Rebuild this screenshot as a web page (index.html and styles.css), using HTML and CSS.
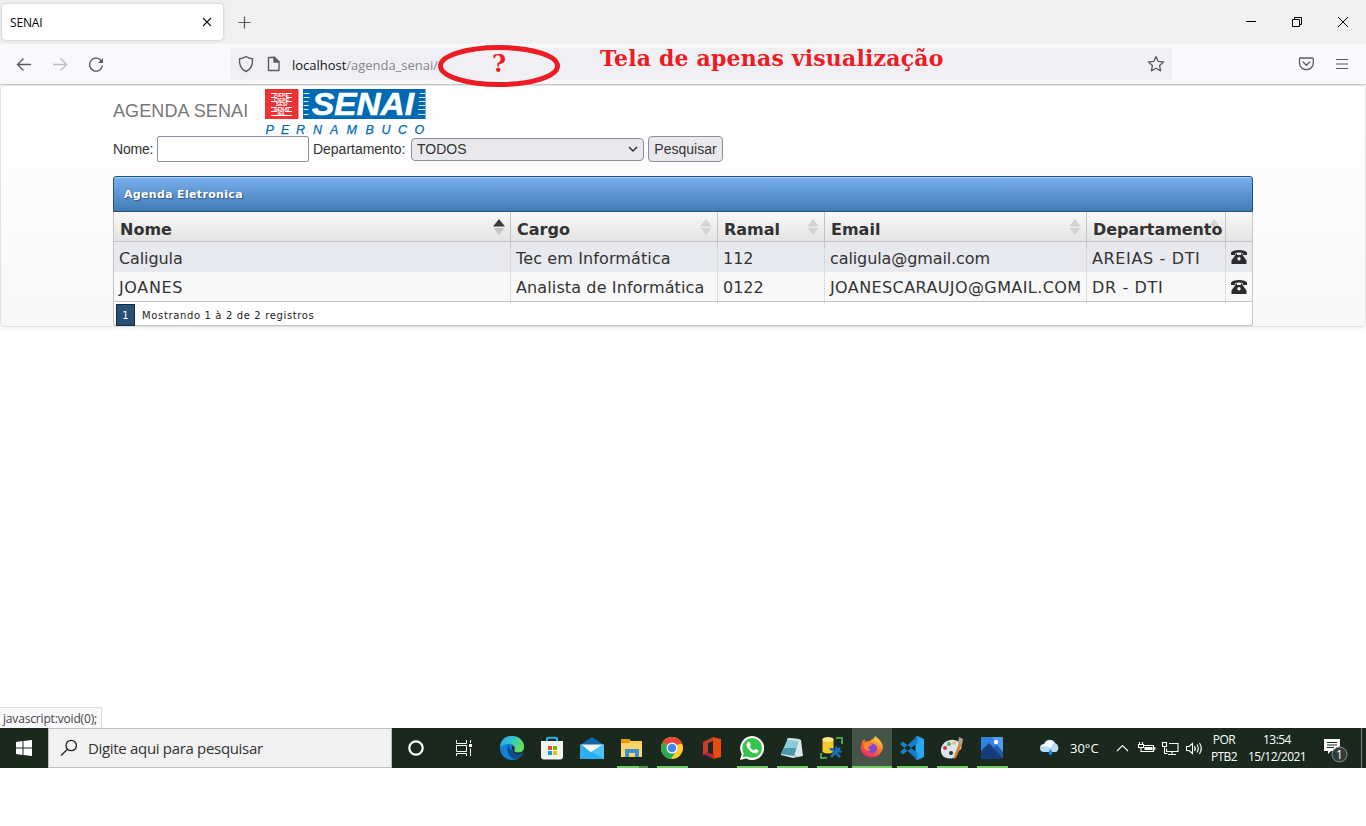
FILE: index.html
```html
<!DOCTYPE html>
<html lang="pt-BR">
<head>
<meta charset="utf-8">
<title>SENAI</title>
<link rel="stylesheet" href="styles.css">
</head>
<body>
<header class="tabstrip">
  <div class="tab"><span>SENAI</span><svg width="10" height="10" viewBox="0 0 10 10"><path d="M1 1l8 8M9 1l-8 8" stroke="#15141a" stroke-width="1.1"/></svg></div>
  <svg class="newtab" width="13" height="13" viewBox="0 0 13 13"><path d="M6.5 0.5v12M0.5 6.5h12" stroke="#5b5b66" stroke-width="1.2"/></svg>
  <div class="winbtns">
    <svg width="46" height="44" viewBox="0 0 46 44"><path d="M18 21.5h10" stroke="#000"/></svg>
    <svg width="46" height="44" viewBox="0 0 46 44" fill="none" stroke="#000"><path d="M18.5 19.500h7v7h-7zM20.500 19.500v-2h7v7h-2"/></svg>
    <svg width="46" height="44" viewBox="0 0 46 44"><path d="M18 17l10 10M28 17l-10 10" stroke="#000"/></svg>
  </div>
</header>
<nav class="toolbar">
  <svg class="nav" width="120" height="40" viewBox="0 0 120 40" fill="none" stroke="#5b5b66" stroke-width="1.400"><path d="M31 20.500H17.500M23.500 14.500l-6 6 6 6"/><path d="M53 20.500h13.500M60.500 14.500l6 6-6 6" stroke="#bdbdc3"/><path d="M101.500 17a6.500 6.500 0 1 0 1 4.500"/><path d="M103 14v5h-5z" fill="#5b5b66" stroke="none"/></svg>
  <div class="urlbar">
    <svg width="54" height="32" viewBox="0 0 54 32" fill="none" stroke="#5b5b66" stroke-width="1.400" stroke-linejoin="round"><path d="M16 8.500q3 2 6.500 2.200c.5 6-2 10.800-6.500 12.800-4.500-2-7-6.800-6.500-12.800Q13 10.500 16 8.500z"/><path d="M38.500 9.500h6l4.500 4.500v8.500H38.500z"/><path d="M44 9v5h5z" fill="#5b5b66"/></svg>
    <span class="url"><b>localhost</b>/agenda_senai/</span>
    <svg class="star" width="18" height="18" viewBox="0 0 18 18" fill="none" stroke="#5b5b66" stroke-width="1.300" stroke-linejoin="round"><path d="M9 1.500l2.200 4.900 5.300.6-3.900 3.600 1 5.300L9 13.300l-4.600 2.600 1-5.300L1.500 7l5.300-.6z"/></svg>
  </div>
  <svg class="menu" width="60" height="20" viewBox="0 0 60 20" fill="none" stroke="#5b5b66" stroke-width="1.300"><path d="M6 4h12q1.300 0 1.300 1.300v3.500a6.700 6.700 0 0 1-13.800 0V5.300Q5.300 4 6 4zM9 8l3.400 3.200L15.800 8" stroke-linejoin="round" stroke-linecap="round"/><path d="M42 5.500h12M42 10h12M42 14.500h12" stroke-width="1.200"/></svg>
  <svg class="mark" width="124" height="44" viewBox="0 0 124 44"><ellipse cx="62" cy="22" rx="58.500" ry="18.500" fill="none" stroke="#ed1c24" stroke-width="5"/></svg>
  <span class="note q">?</span><span class="note phrase">Tela de apenas visualização</span>
</nav>
<main class="page">
  <section class="well">
    <div class="brand"><h1>AGENDA SENAI</h1>
      <svg width="166" height="47" viewBox="0 0 166 47" font-family="Liberation Sans, sans-serif">
        <path d="M0 0h33.500v30H0z" fill="#ee3135"/>
        <path d="M6 4.500h6M21 4.500h6M6 8.500h6M21 8.500h6M6 12.500h6M21 12.500h6M6 18.500h5M22 18.500h5M6 22.500h6M20 22.500h7M6 26.500h21" stroke="#fff" stroke-width="1"/>
        <g font-size="5" font-weight="bold" font-style="italic" fill="#fff" text-anchor="middle"><text x="16.500" y="8">FIEPE</text><text x="16.500" y="12.500">CIEPE</text><text x="16.500" y="17">SESI</text><text x="16.500" y="21.800">SENAI</text><text x="16.500" y="26">IEL</text></g>
        <path d="M38 0h122.500v30H38z" fill="#0069b4"/>
        <path d="M38.500 4.500h6M38.500 8.500h6M38.500 12.500h5M38.500 16.500h5M38.500 20.500h5M38.500 25.500h5M155 4.500h5M154 8.500h6M154 12.500h6M154 16.500h6M153 20.500h7M153 25.500h7" stroke="#dcebf6" stroke-width="1"/>
        <text x="47" y="26" font-size="31" font-weight="bold" font-style="italic" fill="#fff" stroke="#fff" stroke-width=".6" textLength="102" lengthAdjust="spacingAndGlyphs">SENAI</text>
        <g font-size="12.500" font-style="italic" fill="#0069b4" stroke="#0069b4" stroke-width=".25"><text x=".5" y="45">P</text><text x="16" y="45">E</text><text x="31" y="45">R</text><text x="48" y="45">N</text><text x="65" y="45">A</text><text x="81.500" y="45">M</text><text x="100.500" y="45">B</text><text x="116.500" y="45">U</text><text x="133" y="45">C</text><text x="149.500" y="45">O</text></g>
      </svg>
    </div>
    <form class="search"><label class="l1">Nome:</label><span class="field"></span><label class="l2">Departamento:</label><span class="select">TODOS<svg width="10" height="7" viewBox="0 0 10 7"><path d="M1 1l4 4 4-4" fill="none" stroke="#333" stroke-width="1.500"/></svg></span><button type="button">Pesquisar</button></form>
    <div class="card">
      <h2>Agenda Eletronica</h2>
      <div class="row head">
        <div>Nome<svg class="sort active" width="12" height="16" viewBox="0 0 12 16"><path class="up" d="M6 0l6 7.500H0z"/><path d="M6 16l5.500-7H.5z"/></svg></div>
        <div>Cargo<svg class="sort" width="12" height="16" viewBox="0 0 12 16"><path class="up" d="M6 0l6 7.500H0z"/><path d="M6 16l5.500-7H.5z"/></svg></div>
        <div>Ramal<svg class="sort" width="12" height="16" viewBox="0 0 12 16"><path class="up" d="M6 0l6 7.500H0z"/><path d="M6 16l5.500-7H.5z"/></svg></div>
        <div>Email<svg class="sort" width="12" height="16" viewBox="0 0 12 16"><path class="up" d="M6 0l6 7.500H0z"/><path d="M6 16l5.500-7H.5z"/></svg></div>
        <div><span class="over">Departamento</span><svg class="sort" width="12" height="16" viewBox="0 0 12 16"><path class="up" d="M6 0l6 7.500H0z"/></svg></div>
        <div></div>
      </div>
      <div class="row odd"><div class="snug">Caligula</div><div class="loose">Tec em Informática</div><div>112</div><div class="snug">caligula@gmail.com</div><div class="caps">AREIAS - DTI</div><div><svg class="phone" width="16" height="14" viewBox="0 0 16 14"><path d="M0 5V2.500Q1.500 0 8 0t8 2.500V5h-4V3Q8 2 4 3v2zM4.500 3.500H6V5h4V3.500h1.500V5l4 5.500V14H.5v-3.500l4-5.500z" fill="#2b2b2b"/><circle cx="8" cy="8.800" r="1.700" fill="#f2f2f2"/></svg></div></div>
      <div class="row even"><div class="caps">JOANES</div><div class="loose">Analista de Informática</div><div>0122</div><div class="mail">JOANESCARAUJO@GMAIL.COM</div><div class="caps">DR - DTI</div><div><svg class="phone" width="16" height="14" viewBox="0 0 16 14"><path d="M0 5V2.500Q1.500 0 8 0t8 2.500V5h-4V3Q8 2 4 3v2zM4.500 3.500H6V5h4V3.500h1.500V5l4 5.500V14H.5v-3.500l4-5.500z" fill="#2b2b2b"/><circle cx="8" cy="8.800" r="1.700" fill="#f2f2f2"/></svg></div></div>
      <div class="foot"><span class="pg">1</span><span class="count">Mostrando 1 à 2 de 2 registros</span></div>
    </div>
  </section>
  <div class="status">javascript:void(0);</div>
</main>
<footer class="taskbar">
  <div class="start"><svg width="16" height="16" viewBox="0 0 16 16"><path d="M0 2l6.500-1v6.500H0zM7.500.9L16 0v7.500H7.500zM0 8.500h6.500V15L0 14zM7.500 8.500H16V16l-8.500-.9z" fill="#fff"/></svg></div>
  <div class="find"><svg width="18" height="18" viewBox="0 0 18 18" fill="none" stroke="#222" stroke-width="1.300"><circle cx="11.200" cy="6.500" r="5.200"/><path d="M7.500 10.200L1 16.500"/></svg><span>Digite aqui para pesquisar</span></div>
  <div class="apps">
    <div class="app wide"><svg width="24" height="24" viewBox="0 0 24 24"><circle cx="12" cy="12" r="6.700" fill="none" stroke="#fff" stroke-width="2.200"/></svg></div>
    <div class="app wide"><svg width="24" height="24" viewBox="0 0 24 24" fill="none" stroke="#fff"><path d="M4.500 4v3.500h10V4M4.500 9.500h10v6h-10zM4.500 20v-2.500h10V20M18.500 4v3M18.500 12.500V20"/><path d="M17 8h3v3h-3z" fill="#fff" stroke="none"/></svg></div>
    <div class="app edge"><svg width="24" height="24" viewBox="0 0 24 24"><defs><linearGradient id="eg" x1="0" y1="0" x2="1" y2=".4"><stop offset="0" stop-color="#2aa5e8"/><stop offset=".5" stop-color="#31c3cf"/><stop offset="1" stop-color="#68df54"/></linearGradient></defs><circle cx="12" cy="12" r="12" fill="#1081d5"/><path d="M0 11C1 3 6 0 12 0c7 0 12 5 12 10.500 0 4-3 6-6 6-2.500 0-4-1-3.500-2.500 1.500-2.500-.5-6-5-6C5 8 1 9.500 0 11z" fill="url(#eg)"/><path d="M9 9c-3 3-2 11 5 14 4-.5 7-3 8.500-6-4 2.500-9 1-9-2.500-3 0-5-2.500-4.500-5.500z" fill="#114a8b"/><path d="M12.500 9.500c2.500 1.500 2.500 3.500 1.500 5 .5 2 3 2.300 5 2 2-.2 4-1 5-3v3l-1.500.5c-4 2.500-9 1-9.500-2.500-1.500-1.500-1.500-3.500-.5-5z" fill="#1a2820"/></svg></div>
    <div class="app"><svg width="24" height="24" viewBox="0 0 24 24"><path d="M7 6V3q0-1.300 1.300-1.300h7.400Q17 1.700 17 3v3" fill="none" stroke="#29b3ed" stroke-width="2"/><path d="M1 5h22v15.500q0 3-3 3H4q-3 0-3-3z" fill="#f3f3f3"/><path d="M8 10h4v4H8z" fill="#f04e24"/><path d="M13 10h4v4h-4z" fill="#7db900"/><path d="M8 15h4v4H8z" fill="#00a2ed"/><path d="M13 15h4v4h-4z" fill="#fdb800"/></svg></div>
    <div class="app"><svg width="24" height="24" viewBox="0 0 24 24"><path d="M0 9L12 1l12 8v14H0z" fill="#1269b2"/><path d="M1 8.500h22L12 18z" fill="#f1f6fa"/><path d="M0 8l12 9L0 23z" fill="#31b0ef"/><path d="M24 8v15H0z" fill="#29aeee"/><path d="M24 8v15L12 16z" fill="#4fc5f6"/></svg></div>
    <div class="app run more"><svg width="24" height="24" viewBox="0 0 24 24"><path d="M1 3h8l2 2h11v16H1z" fill="#f8cd58"/><path d="M1 3h8l1 2-1 2H1z" fill="#e2a100"/><path d="M1 8h21v12H1z" fill="#ffd66a"/><path d="M5 21v-8h14v8h-4v-4H9v4z" fill="#3e8ed5"/></svg></div>
    <div class="app run"><svg width="24" height="24" viewBox="0 0 24 24"><circle cx="12" cy="12" r="11" fill="#fc3"/><path d="M12 12L2.500 6.500a11 11 0 0 1 19 0z" fill="#e9453a"/><path d="M2.500 6.500A11 11 0 0 0 11 23l5.500-8.500L12 12z" fill="#2da94f"/><path d="M12 6.500h9.500L22 8H12z" fill="#e9453a"/><circle cx="12" cy="12" r="5.500" fill="#fff"/><circle cx="12" cy="12" r="4.300" fill="#4285f4"/></svg></div>
    <div class="app"><svg width="24" height="24" viewBox="0 0 24 24"><path d="M3 6L13 1v4L8 7.500v9L3 19z" fill="#c93a30"/><path d="M13 1l8 2v18l-8 2z" fill="#ea4c0d"/><path d="M3 18l5-1.500 6 1.500v5z" fill="#b32738"/><path d="M8 7.500L13 6v12l-5-1.500z" fill="#1a281e"/></svg></div>
    <div class="app run"><svg width="24" height="24" viewBox="0 0 24 24"><path d="M0 24l1.700-6A12 12 0 1 1 6 22.400z" fill="#fff"/><circle cx="12.100" cy="11.900" r="9.900" fill="#35c54a"/><path d="M2.600 21.400L4 16l4 4z" fill="#35c54a"/><path d="M8 6c-2.500 2-1.500 5.500 2 8.700 3.500 3.300 7 3.800 8.300.8.400-1.200 0-1.600-2.300-2.600-1-.4-1.300 1.600-2.100 1.500-1.700-.5-3.600-2.300-4.100-3.800-.1-.8 1.400-1.100 1-2.100C10 6.300 9.600 5.500 8 6z" fill="#fff"/></svg></div>
    <div class="app run"><svg width="24" height="24" viewBox="0 0 24 24"><path d="M8 2l11 1-5 17L1 18z" fill="#8ecbd8"/><path d="M19 3l2 1 2 16-5 1-4-1z" fill="#d5e8ec"/><path d="M4 12h12l-2 8-13-2z" fill="#4c98ab"/><path d="M1 18l13 2 4 1-5 1-12-3z" fill="#dfe7e8"/><path d="M8 2l11 1v2L7 4z" fill="#d4e1e3"/></svg></div>
    <div class="app run"><svg width="24" height="24" viewBox="0 0 24 24"><path d="M2.500 3v13q5.500 3 11 0V3z" fill="#f7c82b"/><ellipse cx="8" cy="3.500" rx="5.500" ry="2.500" fill="#ffe590"/><path d="M16 2h6v6M1 17v5h6" fill="none" stroke="#4a9d55" stroke-width="2"/><path d="M11 21l9-9M12 13l8 8" stroke="#1670bd" stroke-width="2.500"/><path d="M9 12h5v3h-3zM17 10l1 4 4 1-1 2-5-1-1-5z" fill="#1670bd"/></svg></div>
    <div class="app run current"><svg width="24" height="24" viewBox="0 0 24 24"><defs><linearGradient id="ff" x1=".8" y1="0" x2=".2" y2="1"><stop offset="0" stop-color="#ffe14d"/><stop offset=".45" stop-color="#ff7b26"/><stop offset="1" stop-color="#ed1869"/></linearGradient></defs><path d="M15 0c4 3 7.500 6 8 11.500A11.500 11.500 0 0 1 .8 14C.5 9 2 5 4.500 3L5 6q2-1 4-.5C11 3 14 4 15 0z" fill="url(#ff)"/><circle cx="12" cy="12.500" r="5" fill="#8146d8"/><path d="M4 7q5-1 8 1.500-1 2-4 2 0 2.500 3 4-5 1-7-3z" fill="#ff8526"/></svg></div>
    <div class="app run"><svg width="24" height="24" viewBox="0 0 24 24"><path d="M17.500 0L24 3v18l-6.500 3-2-1V1z" fill="#29a8f2"/><path d="M17.500 0v7L3 18.500 0 16zM17.500 24v-7L3 5.500 0 8z" fill="#167fc9"/></svg></div>
    <div class="app run"><svg width="24" height="24" viewBox="0 0 24 24"><path d="M1 13C2 7 8 3 14 4c6 1 9 5 7 9-1 2-4 1-5 3s1 5-3 6C6 24 0 20 1 13z" fill="#d9e5ef"/><circle cx="5" cy="12" r="2" fill="#d63b38"/><circle cx="9" cy="8" r="1.900" fill="#49ae50"/><circle cx="14" cy="7" r="1.800" fill="#eebe3a"/><circle cx="11" cy="17" r="2" fill="#26362b"/><path d="M13 23l6-16 3 1-6 14z" fill="#d78131"/><path d="M18 7l1-6 4 2-1 6z" fill="#b8a18a"/></svg></div>
    <div class="app run"><svg width="24" height="24" viewBox="0 0 24 24"><path d="M1 1h22v22H1z" fill="#3182de"/><path d="M12 1h11v17z" fill="#529ceb"/><path d="M1 23V15l8-8 14 15v1z" fill="#153d79"/><path d="M13 12l4-3 6 7v6z" fill="#235baa"/><circle cx="16" cy="6" r="2.200" fill="#fff"/></svg></div>
  </div>
  <div class="tray">
    <svg class="cloud" width="20" height="18" viewBox="0 0 20 18"><path d="M4 13a4 4 0 0 1 0-8 6 6 0 0 1 11-1 5 5 0 0 1 1 9z" fill="#b7dbf8"/><path d="M1 8a5 5 0 0 1 4-3 6 6 0 0 1 10-1q-3 1-4 5-5-3-10-1z" fill="#f2f9ff"/><path d="M10.500 10q4 5 0 6-4-1 0-6z" fill="#2384dd"/></svg>
    <span class="temp">30°C</span>
    <svg class="sys" width="90" height="20" viewBox="0 0 90 20" fill="none" stroke="#fff" stroke-width="1.100"><path d="M1 13l5.500-5.500L12 13"/><path d="M27 7.500h10.500v6H26.500"/><path d="M29 9.500h7v2h-7z" fill="#fff"/><path d="M38.800 9v3M23.500 4v3M26.500 4v3M22.500 6.500h5v3h-5z"/><path d="M25 9.500v4h3"/><path d="M53 5.500h9v8H50.500v-3M56 13.500v3M52 16.500h8M46.500 4.500h4v4h-4zM48.500 8.500v7h3"/><path d="M70.500 8.500h2.500l3.500-3v10l-3.500-3h-2.500zM78.500 8q1.500 2.500 0 5M81 6.500q2.500 4 0 8M83.500 5q3.500 5.500 0 11"/></svg>
    <span class="duo lang">POR<br>PTB2</span><span class="duo clock">13:54<br>15/12/2021</span>
    <svg class="notif" width="28" height="28" viewBox="0 0 28 28"><path d="M1 3h16v12H8l-3 3v-3H1z" fill="#fff"/><path d="M4 6.500h10M4 9h10M4 11.500h7" stroke="#1a2820"/><circle cx="16.500" cy="18.500" r="7.500" fill="#343b38" stroke="#8a8f8c"/><text x="16.500" y="23" font-family="Open Sans, sans-serif" font-size="12" fill="#fff" text-anchor="middle">1</text></svg>
    <span class="peek"></span>
  </div>
</footer>
</body>
</html>
```
FILE: styles.css
```css
* { box-sizing: border-box; }
body { margin: 0; height: 826px; background: #fff; overflow: hidden; font-family: "Open Sans", "Noto Sans", sans-serif; }
svg { display: block; flex: none; }
.tabstrip { height: 44px; background: #f0f0f0; display: flex; align-items: center; padding-left: 2px; }
.tab { width: 221px; height: 36px; background: #fff; border-radius: 4px; box-shadow: 0 0 3px #8888; display: flex; align-items: center; justify-content: space-between; padding: 0 11px 0 8px; font-size: 12px; letter-spacing: -.15px; color: #000; }
.newtab { margin-left: 15px; }
.winbtns { margin-left: auto; display: flex; }
.toolbar { height: 41px; background: #f9f9fb; border-bottom: 1px solid #ccc; position: relative; display: flex; align-items: flex-start; }
.urlbar { margin: 4px 0 0 110px; width: 942px; height: 32px; border-radius: 4px; background: #f0f0f4; display: flex; align-items: center; padding-right: 7px; }
.url { margin-left: 8px; font-size: 13px; line-height: 18px; letter-spacing: -.02px; color: #85858c; padding-top: 2px; }
.url b { font-weight: 400; color: #15141a; }
.star { margin-left: auto; }
.menu { margin: 10px 0 0 122px; }
.mark { position: absolute; left: 437px; top: 0; z-index: 2; }
.note { position: absolute; z-index: 3; font: bold 22px/28px "DejaVu Serif", serif; color: #ed1c24; white-space: nowrap; }
.q { left: 492px; top: 6px; font-size: 24px; }
.phrase { left: 600px; top: 0; letter-spacing: .18px; }
.page { position: relative; height: 643px; }
.well { height: 242px; border: 1px solid #e3e3e3; border-radius: 4px; background: linear-gradient(#fff, #f8f8f8); box-shadow: 0 1px 4px #0001; padding: 3px 112px 0; font-family: "Liberation Sans", Arial, sans-serif; color: #333; }
.brand { display: flex; height: 47px; }
.brand h1 { margin: 0; width: 152px; font-size: 18px; font-weight: 400; line-height: 44px; letter-spacing: .1px; color: #777; white-space: nowrap; }
.search { display: flex; align-items: center; height: 26px; font-size: 14px; }
.search label { white-space: nowrap; }
.l1 { width: 40px; letter-spacing: -.2px; }
.l2 { width: 94px; letter-spacing: -.02px; }
.field { flex: none; width: 152px; height: 26px; margin: 0 4px; background: #fff; border: 1px solid #8f8f9d; border-radius: 2px; }
.select { width: 233px; height: 23px; margin: 0 4px; padding: 0 5px; display: flex; align-items: center; justify-content: space-between; background: #e9e9ed; border: 1px solid #8f8f9d; border-radius: 4px; }
.search button { width: 75px; height: 26px; padding: 0; font: 14px "Liberation Sans", Arial, sans-serif; color: #333; background: #e9e9ed; border: 1px solid #8f8f9d; border-radius: 4px; }
.card { margin-top: 14px; width: 1140px; font-family: "DejaVu Sans", Verdana, sans-serif; }
.card h2 { margin: 0; height: 36px; padding-left: 10px; border: 1px solid #25507b; border-radius: 3px 3px 0 0; background: linear-gradient(#79b0ee, #417bb5); box-shadow: inset 0 1px #a9cef7; color: #fff; text-shadow: 1px 1px 1px #2e5680; font-size: 11px; line-height: 36px; letter-spacing: .33px; }
.row { display: grid; grid-template-columns: 397px 207px 107px 262px 139px 26px; border: solid #c5c5c5; border-width: 0 1px; height: 30px; font-size: 16px; line-height: 33px; color: #333; }
.row > div { position: relative; padding-left: 5px; white-space: nowrap; border-right: 1px dotted #c5c5c5; }
.row > div:last-child { border-right: 0; }
.row .snug { letter-spacing: -.1px; }
.row .loose { letter-spacing: .12px; }
.row .caps { letter-spacing: .64px; }
.row .mail { letter-spacing: .4px; }
.head { font-weight: 700; background: linear-gradient(#f8f8f8, #e4e4e4); border-bottom-width: 1px; line-height: 36px; }
.row.head > div { padding-left: 6px; border-right-style: solid; }
.row.head > div:last-child { border-right: 0; }
.sort { position: absolute; right: 5px; top: 7px; fill: #d4d4d4; }
.sort.active { fill: #c5c5c5; }
.sort.active .up { fill: #3c3c3c; }
.over { position: relative; z-index: 1; letter-spacing: -.08px; }
.odd { background: #e8e9ee; }
.even { background: #f8f8f8; border-bottom-width: 1px; line-height: 31px; }
.phone { margin-top: 8px; }
.foot { height: 24px; display: flex; align-items: center; background: #fff; border: 1px solid #c5c5c5; border-top: 0; border-radius: 0 0 3px 3px; padding: 2px 0 0 2px; font-size: 10px; color: #222; }
.pg { width: 19px; height: 22px; line-height: 22px; text-align: center; color: #fff; background: #294f75; border: 1px solid #0b2c50; }
.count { margin-left: 7px; padding-top: 1px; letter-spacing: .64px; }
.status { position: absolute; left: 0; bottom: 0; width: 102px; height: 21px; border: solid #ddd; border-width: 1px 1px 0 0; background: #f9f9fb; padding-left: 3px; font-size: 12px; line-height: 21px; letter-spacing: -.17px; color: #444; white-space: nowrap; }
.taskbar { height: 40px; background: #1a281e; display: flex; color: #fff; }
.start { width: 48px; display: grid; place-items: center; }
.find { width: 344px; background: #f1f1f1; border: 1px solid #bbb; display: flex; align-items: center; padding-left: 11px; font-size: 15px; letter-spacing: -.32px; color: #333; }
.find span { margin-left: 10px; }
.apps { display: flex; }
.app { width: 40px; height: 40px; position: relative; display: grid; place-items: center; }
.app.wide { width: 48px; }
.app.edge { margin-left: 4px; }
.run::after { content: ""; position: absolute; left: 5px; bottom: 0; width: 31px; height: 2px; background: #6bcb5f; }
.more::after { background: linear-gradient(90deg, #6bcb5f 22px, #499142 22px); }
.current { background: #455348; }
.current::after { left: 0; width: 40px; }
.tray { margin-left: auto; width: 326px; display: flex; align-items: center; font-size: 13px; }
.temp { width: 47px; margin-left: 10px; letter-spacing: 0; }
.sys { margin-left: -1px; }
.duo { font-size: 12px; line-height: 17px; text-align: center; letter-spacing: -.55px; white-space: nowrap; }
.lang { width: 28px; margin-left: 4px; }
.clock { width: 62px; margin-left: 8px; }
.notif { margin-left: 15px; margin-top: 4px; }
.peek { margin-left: auto; margin-right: 4px; width: 1px; height: 40px; background: #78817b; }
```
